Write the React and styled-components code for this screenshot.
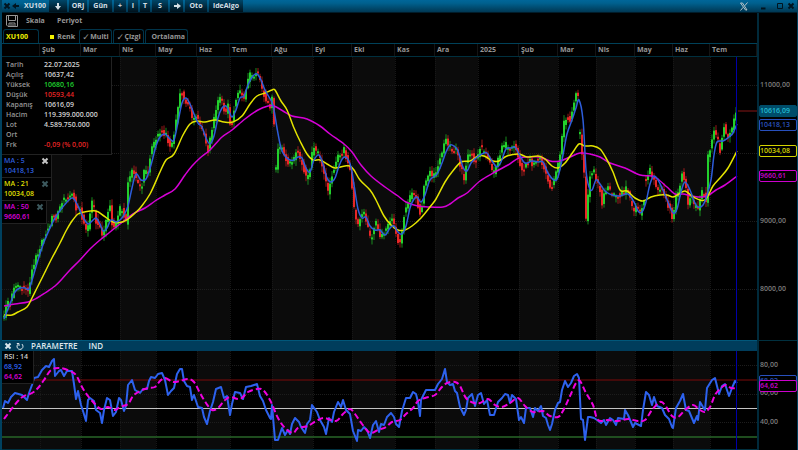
import React from "react";
import styled, { createGlobalStyle, css } from "styled-components";

const MONTHS = [
  ["", 0, 40, 1], ["Şub", 40, 81, 1], ["Mar", 81, 120, 0], ["Nis", 120, 156, 1], ["May", 156, 197, 0],
  ["Haz", 197, 230, 1], ["Tem", 230, 272, 0], ["Ağu", 272, 313, 1], ["Eyl", 313, 352, 0],
  ["Eki", 352, 395, 1], ["Kas", 395, 435, 0], ["Ara", 435, 478, 1], ["2025", 478, 519, 0],
  ["Şub", 519, 558, 1], ["Mar", 558, 596, 0], ["Nis", 596, 635, 1], ["May", 635, 673, 0],
  ["Haz", 673, 710, 1], ["Tem", 710, 757, 0],
].map(([label, from, to, shaded]) => ({ label, from: Math.max(from, 2), to, shaded: Boolean(shaded) }));

const parse = (text) => text.trim().split(/\s+/).map((p) => p.split(",").map(Number));

const PRICE = [
  "4,317 6,308 8,302 10,303 12,296 14,285 17,285 20,288 24,288 28,291 30,281 33,266 35,258 38,253 41,243 45,234 50,224 53,212 56,220 60,207 63,200 66,198 70,196 73,194 76,208 80,210 84,224 87,235 91,205 93,202 96,222 100,230 103,238 107,215 110,208 113,230 116,225 120,209 123,212 126,222 128,182 132,170 136,178 139,188 142,185 144,172 148,170 151,150 155,140 158,134 162,132 166,135 169,145 172,144 175,127 178,105 180,92 184,97 187,105 190,108 193,120 196,117 200,126 204,135 208,150 213,122 217,103 221,99 225,115 228,105 231,130 234,108 237,92 241,93 244,98 247,83 250,75 254,74 257,73 260,80 263,92 267,103 270,108 272,98 274,122",
  "276,170 278,150 282,148 285,157 289,163 293,160 296,152 299,155 303,165 307,182 310,168 313,148 316,150 320,158 324,172 328,192 331,177 335,165 338,155 341,155 344,150 347,160 350,170 353,197 355,218 358,227 361,212 365,214 368,228 371,240 374,226 377,220 380,240 384,232 388,225 392,220 396,232 399,246 400,243 402,230 405,208 408,203 411,195 415,192 418,205 421,217 424,185 427,175 430,173 433,178 436,172 440,160 443,148 445,136 448,145 452,150 456,150 460,165 464,178 467,156 471,150 474,160 477,160 480,148 484,150 488,158 492,170 495,172 499,155 502,148 506,145 510,147 514,144 518,155 521,168 525,168 529,160 533,165 537,158 541,160 545,170 549,183 552,188 555,175 558,165 560,155 562,135 564,122 567,118 570,120 573,105 576,95 579,94",
  "580,135 583,166 585,182 586,220 588,195 590,175 593,168 596,180 600,190 602,205 605,190 608,188 612,195 616,197 620,195 624,192 627,186 630,198 633,212 636,208 640,214 644,198",
  "646,180 648,173 650,170 654,180 658,190 662,188 666,200 670,210 673,220 676,198 679,188 682,174 685,182 688,205 691,195 694,205 698,208 701,192 704,195 706,200 708,155 711,147 714,130 717,137 720,150 724,127 728,138 731,130 733,125 735,111 737,109",
].map(parse);

const MA5 = parse("4,319 10,304 15,292 20,288 25,288 29,289 33,277 38,260 44,242 50,228 55,218 62,208 68,201 73,198 78,206 83,217 88,224 92,221 96,218 100,224 103,231 107,228 111,220 116,222 120,220 124,215 128,206 132,188 136,174 141,180 146,179 151,165 156,146 160,137 165,134 170,139 174,140 178,122 182,103 186,98 190,104 194,114 198,123 202,127 206,138 210,144 214,136 218,118 222,108 226,106 229,111 232,117 236,110 240,98 244,96 248,85 253,76 257,74 261,80 265,90 269,97 273,105 277,128 281,148 285,156 290,160 294,160 298,157 302,158 306,168 310,172 314,160 319,155 323,164 327,178 331,182 335,178 339,166 343,158 347,158 351,167 354,185 358,209 362,218 366,217 370,226 375,230 380,230 385,235 390,228 394,226 398,232 402,234 406,226 410,208 414,199 417,197 421,202 425,195 430,180 437,174 442,163 446,152 450,145 454,146 458,151 463,167 467,171 471,163 476,158 482,154 487,153 492,161 497,167 501,162 506,149 511,148 515,147 519,154 525,163 532,161 538,162 543,162 548,173 554,180 558,177 563,155 567,134 572,120 576,108 579,100 583,120 586,170 589,187 592,190 596,180 600,184 605,191 612,195 620,196 628,194 634,202 638,211 642,212 646,202 650,184 654,176 658,180 663,190 668,202 673,213 677,209 681,192 685,182 690,190 694,201 698,207 703,205 707,195 711,180 714,155 717,142 723,141 729,137 733,133 737,124");
const MA21 = parse("4,315 12,315 18,312 27,307 32,298 38,286 45,272 52,258 60,243 66,231 72,221 78,214 84,212 96,211 104,216 113,222 122,222 128,219 135,213 141,207 150,194 160,172 166,160 174,154 183,135 190,124 197,121 205,122 215,120 224,122 233,122 242,116 250,104 257,96 265,93 272,90 275,90 281,101 287,110 294,128 300,141 307,154 313,160 320,160 327,164 335,168 345,166 350,166 354,170 360,180 370,190 376,200 384,216 391,225 398,230 405,230 412,226 421,218 430,207 436,199 445,182 452,172 461,162 470,161 478,156 484,156 493,161 499,161 507,156 519,154 527,157 538,156 545,159 552,166 558,168 565,163 573,152 579,144 585,146 593,146 600,149 606,158 613,172 620,190 627,191 635,198 643,201 651,197 660,195 667,195 673,197 679,194 685,191 692,196 700,200 706,199 713,186 720,178 728,168 737,151");
const MA50 = parse("4,306 15,304 28,302 37,298 45,293 55,286 62,279 70,270 80,260 90,249 100,240 110,232 120,224 133,214 145,208 155,201 165,195 175,189 185,175 192,166 200,158 210,150 222,137 232,130 245,119 258,110 268,106 274,106 283,111 292,116 307,119 320,126 330,134 344,144 352,152 361,165 371,176 385,187 398,196 406,202 418,206 430,207 443,207 450,204 458,198 467,193 480,181 495,172 508,165 519,158 530,157 540,157 550,161 560,161 570,157 580,153 590,154 600,157 610,163 625,168 640,175 652,176 659,180 667,187 675,194 683,194 692,196 702,197 709,195 716,190 725,185 737,176");
const RSI = parse("3,408 5,401 8,403 11,397 15,393 22,395 27,400 29,393 32,385 34,378 38,377 42,370 46,366 49,367 52,361 54,359 55,376 59,371 61,370 64,376 67,371 72,371 74,384 76,399 78,391 81,405 83,411 86,421 88,400 90,398 94,401 96,410 100,413 102,423 104,410 107,398 110,400 113,416 116,412 119,398 121,400 124,411 126,406 128,385 132,380 135,390 140,393 143,389 147,389 149,381 151,377 155,378 158,374 162,373 165,380 168,395 171,391 174,388 177,374 180,369 182,369 184,381 187,386 190,387 192,400 194,395 198,407 202,408 204,417 207,424 210,411 213,402 216,389 221,387 224,398 227,396 230,415 232,404 235,392 240,393 243,399 246,387 251,386 257,384 260,396 263,401 266,410 270,418 271,419 272,405 275,440 278,440 282,428 285,435 288,430 290,434 292,424 295,418 299,422 301,427 305,433 307,424 310,420 312,405 317,412 320,420 324,427 326,434 329,418 332,422 334,412 338,402 341,407 343,400 346,410 350,414 353,431 357,441 358,430 361,431 364,427 367,430 370,438 373,425 376,421 379,432 381,424 384,425 387,417 391,413 394,417 396,424 399,427 402,411 406,398 410,398 413,392 416,394 418,402 420,416 421,400 426,390 435,390 438,384 442,379 445,369 447,382 450,385 453,384 455,391 457,393 460,407 464,415 466,410 468,398 472,394 475,406 478,395 481,393 484,404 487,400 490,415 494,415 498,402 502,398 505,394 508,395 510,403 512,395 516,399 519,420 521,417 524,423 526,408 530,408 533,417 535,408 538,411 541,406 543,416 546,418 548,425 550,430 552,424 555,410 558,403 560,402 562,390 565,381 568,387 571,383 574,376 577,374 579,378 581,419 583,420 585,440 588,417 590,417 594,418 597,420 601,423 604,420 606,425 610,418 613,420 616,425 618,418 624,419 625,410 628,415 633,427 635,423 641,426 643,410 646,392 649,395 652,405 654,397 657,406 662,408 665,415 669,419 672,427 673,428 676,408 680,401 683,394 686,410 689,411 694,423 697,416 698,420 700,402 703,407 705,410 707,388 712,380 715,378 719,394 722,386 725,384 729,396 732,388 735,381 737,383");
const RSI_MA = parse("4,419 10,411 18,401 24,396 32,393 38,388 44,380 51,370 60,368 70,371 76,375 82,387 88,396 95,404 101,409 108,407 115,410 120,407 128,404 133,396 140,391 148,388 155,387 160,381 165,378 173,382 180,381 188,379 194,382 200,393 206,403 212,410 218,408 224,401 230,397 240,399 248,392 257,389 263,390 270,400 278,418 285,428 293,433 298,428 308,426 316,421 324,418 336,421 343,414 350,409 355,414 362,424 370,433 378,430 386,427 392,422 400,420 406,414 413,408 418,401 425,398 435,395 441,388 447,383 455,382 460,386 466,398 474,403 480,403 488,399 495,405 502,407 510,403 518,398 525,406 533,412 543,411 550,416 558,417 563,411 570,396 576,383 580,381 586,393 593,405 598,420 608,420 618,421 628,419 638,421 645,420 652,410 660,402 665,405 672,416 678,417 685,410 693,405 700,410 705,412 710,407 715,395 721,388 726,385 731,388 737,388");

const straight = (pts) => "M" + pts.map((p) => p.join(" ")).join("L");

const smooth = (pts) =>
  pts.reduce((d, p, i) => {
    if (i === 0) return `M${p[0]} ${p[1]}`;
    const a = pts[i - 2] || pts[i - 1];
    const b = pts[i - 1];
    const n = pts[i + 1] || p;
    const c1 = [b[0] + (p[0] - a[0]) / 6, b[1] + (p[1] - a[1]) / 6];
    const c2 = [p[0] - (n[0] - b[0]) / 6, p[1] - (n[1] - b[1]) / 6];
    return `${d}C${c1.map((v) => v.toFixed(1)).join(" ")} ${c2.map((v) => v.toFixed(1)).join(" ")} ${p[0]} ${p[1]}`;
  }, "");

const noise = (n) => {
  const s = Math.sin(n * 12.9898) * 43758.5453;
  return s - Math.floor(s);
};

const valueAt = (pts, x) => {
  const i = pts.findIndex((p) => p[0] >= x);
  if (i <= 0) return pts[i === 0 ? 0 : pts.length - 1][1];
  const [x0, y0] = pts[i - 1];
  const [x1, y1] = pts[i];
  return y0 + ((y1 - y0) * (x - x0)) / (x1 - x0);
};

const CANDLES = PRICE.flatMap((pts) => {
  const list = [];
  const end = pts[pts.length - 1][0];
  for (let x = pts[0][0]; x <= end; x += 2) {
    const open = valueAt(pts, x - 2) + (noise(x) - 0.5) * 6;
    const close = valueAt(pts, x) + (noise(x + 0.5) - 0.5) * 6;
    const top = Math.min(open, close);
    const bottom = Math.max(open, close, top + 2);
    list.push({
      x, top, bottom,
      high: top - 1 - noise(x + 7) * 5,
      low: bottom + 1 + noise(x + 13) * 5,
      up: close < open,
    });
  }
  return list;
});

const GlobalStyle = createGlobalStyle`
  * { box-sizing: border-box; }
  body { margin: 0; background: #000; }
  button, input { font: inherit; color: inherit; margin: 0; padding: 0; border: 0; background: none; }
`;

const Window = styled.main`
  display: flex;
  flex-direction: column;
  height: 100vh;
  min-height: 400px;
  overflow: hidden;
  border-left: 2px solid #00415f;
  border-right: 1px solid #00415f;
  background: #000;
  color: #969696;
  font: 600 7px/10px "Open Sans", "Noto Sans", sans-serif;
`;

const TitleBar = styled.header`
  display: flex;
  flex: none;
  height: 13px;
  padding-right: 1px;
  background: linear-gradient(#006699, #00618f 25%, #003854);
  border-bottom: 1px solid #001c2a;
`;

const TitleButton = styled.button`
  display: flex;
  align-items: center;
  justify-content: center;
  width: ${(p) => p.$width}px;
  height: 12px;
  color: ${(p) => p.$color || "#d3dfe5"};
  font-weight: 700;
  ${(p) => p.$boxed && css`
    border-right: 2px solid transparent;
    background: linear-gradient(#004668, #00121c) padding-box;
  `}
`;

const Spacer = styled.div`
  flex: 1;
`;

const Workspace = styled.div`
  display: grid;
  flex: 1;
  min-height: 0;
  grid-template-columns: minmax(0, 1fr) 40px;
  grid-template-rows: 15px 16px 13px minmax(0, 283fr) 11px minmax(0, 99fr);
`;

const MenuRow = styled.nav`
  display: flex;
  align-items: center;
  padding-left: 3px;
`;

const MenuButton = styled.button`
  min-width: ${(p) => p.$width}px;
  text-align: left;
  font-weight: 700;
`;

const TabRow = styled.div`
  display: flex;
  gap: 1px;
  padding: 1px 0 0 1px;
  border-bottom: 1px solid #004159;
`;

const tabFrame = css`
  display: flex;
  align-items: center;
  justify-content: ${(p) => p.$align || "center"};
  width: ${(p) => p.$width}px;
  padding: 0 2px;
  font-weight: 700;
  color: ${(p) => (p.$active ? "#f2f200" : "#969696")};
  border: 1px solid ${(p) => (p.$plain ? "transparent" : "#00344a")};
  border-bottom: 0;
  border-radius: 3px 3px 0 0;
`;

const Tab = styled.button`
  ${tabFrame}
`;

const CheckTab = styled.label`
  ${tabFrame}
  gap: 1px;
`;

const Check = styled.input`
  appearance: none;
  width: 7px;
  height: 10px;
  &:checked::before { content: "✓"; font: 700 9px/10px "DejaVu Sans", sans-serif; }
`;

const Swatch = styled.span`
  width: 4px;
  height: 4px;
  margin-right: 3px;
  background: #f2f200;
`;

const Months = styled.div`
  display: grid;
  grid-template-columns: ${MONTHS.map((m) => `${m.to - m.from}fr`).join(" ")};
  border-bottom: 1px solid #00303f;
  font-weight: 700;
`;

const Month = styled.div`
  padding: 1px 0 0 2px;
  border-right: 1px solid #141414;
  white-space: nowrap;
  overflow: hidden;
`;

const Panel = styled.section`
  position: relative;
  min-width: 0;
  min-height: 0;
`;

const Plot = styled.svg`
  display: block;
  width: 100%;
  height: 100%;
`;

const AxisCell = styled.div`
  position: relative;
  grid-column: 2;
  grid-row: ${(p) => p.$row};
  border-left: 2px solid #002a3b;
  ${(p) => p.$line && "border-top: 1px solid #00303f;"}
`;

const Tick = styled.span`
  position: absolute;
  left: 0;
  padding-left: 1px;
  transform: translateY(-50%);
  color: #7c7c7c;
`;

const Tag = styled(Tick)`
  right: 0;
  padding-left: 0;
  border: 1px solid ${(p) => p.$color};
  border-radius: 2px;
  background: ${(p) => p.$fill || "#000"};
  color: ${(p) => p.$text || p.$color};
`;

const Overlay = styled.div`
  position: absolute;
  top: 0;
  left: 0;
  display: flex;
  flex-direction: column;
  align-items: flex-start;
`;

const QuoteTable = styled.table`
  width: 110px;
  padding: 3px 0 4px 4px;
  border-spacing: 0;
  background: #000;
  border-right: 1px solid #222;
  border-bottom: 1px solid #222;
`;

const QuoteName = styled.th`
  width: 38px;
  height: 10px;
  padding: 0;
  text-align: left;
  font-weight: 600;
`;

const QuoteValue = styled.td`
  padding: 0;
  white-space: nowrap;
  color: ${(p) => p.$color};
`;

const Legend = styled.div`
  width: ${(p) => p.$width}px;
  padding: 1px 2px;
  background: #000;
  color: ${(p) => p.$color};
  border-right: 1px solid #222;
  border-bottom: 1px solid #222;
`;

const LegendHead = styled.div`
  display: flex;
  justify-content: space-between;
  white-space: nowrap;
`;

const LegendLine = styled.div`
  white-space: nowrap;
  color: ${(p) => p.$color};
`;

const LegendClose = styled.button`
  width: 8px;
  height: 10px;
  color: ${(p) => p.$color};
`;

const IndicatorBar = styled.div`
  display: flex;
  align-items: center;
  gap: 11px;
  padding-left: 2px;
  background: #003d5c;
  border-top: 1px solid #00577a;
  color: #dbe6ec;
`;

const IndicatorButton = styled.button`
  display: flex;
  font-size: 8px;
  font-weight: 600;
  line-height: 10px;
`;

const IndicatorTools = styled.div`
  display: flex;
  align-items: center;
  gap: 4px;
  margin-right: -4px;
`;

const Glyph = styled.svg`
  display: block;
  flex: none;
  fill: none;
  stroke: currentColor;
`;

const Cross = () => (
  <Glyph width="8" height="8" viewBox="0 0 8 8" strokeWidth="2" aria-hidden="true">
    <path d="M1.5 1.5 6.5 6.5M6.5 1.5 1.5 6.5" />
  </Glyph>
);

const Arrow = ({ angle }) => (
  <Glyph width="8" height="8" viewBox="0 0 8 8" strokeWidth="2" aria-hidden="true">
    <g transform={`rotate(${angle} 4 4)`}>
      <path d="M1 4H5" />
      <path d="M4 1 8 4 4 7Z" fill="currentColor" stroke="none" />
    </g>
  </Glyph>
);

const SaveIcon = () => (
  <Glyph width="14" height="14" viewBox="0 0 14 14" aria-hidden="true">
    <path d="M1.5 1.5H12.5V12.5H3L1.5 11ZM3.5 1.5V6.5H10.5V1.5" />
    <path d="M4 12V9H10V12M6 9.5V12M8 10V12" />
  </Glyph>
);

const ReloadIcon = () => (
  <Glyph width="8" height="10" viewBox="0 0 8 10" aria-hidden="true">
    <path d="M2.5 2.8A3 3 0 1 0 5.8 3M0.8 2.5H3V5" />
  </Glyph>
);

const BrandIcon = () => (
  <Glyph width="8" height="9" viewBox="0 0 8 9" aria-hidden="true">
    <path d="M0.5 1H2.5L7 8H5.5ZM7.5 0.5 4.7 3.8M3.2 5.3 0.5 8.5" />
  </Glyph>
);

const MinimizeIcon = () => (
  <Glyph width="6" height="8" viewBox="0 0 6 8" strokeWidth="2" aria-hidden="true"><path d="M1 6.5H5.5" /></Glyph>
);

const MaximizeIcon = () => (
  <Glyph width="6" height="8" viewBox="0 0 6 8" aria-hidden="true"><path d="M.5 1.5H5.5V6.5H.5Z" /></Glyph>
);

const Backdrop = ({ top, bottom, lines }) => (
  <g>
    {MONTHS.map((m) => (
      <rect key={m.from} x={m.from} y={top} width={m.to - m.from} height={bottom - top} fill={m.shaded ? "#0b0b0b" : "#000"} />
    ))}
    <g stroke="#1d1d1d" strokeDasharray="1 1">
      {lines.map((y) => <path key={y} d={`M2 ${y}H757`} />)}
      {MONTHS.slice(0, -1).map((m) => <path key={m.to} d={`M${m.to + 0.5} ${top}V${bottom}`} stroke="#171717" />)}
    </g>
  </g>
);

const PriceChart = () => (
  <Plot viewBox="2 57 755 283" preserveAspectRatio="none" role="img" aria-label="XU100">
    <Backdrop top={57} bottom={340} lines={[85.5, 153.5, 221.5, 289.5]} />
    {CANDLES.map((c) => (
      <g key={c.x} fill={c.up ? "#22d02c" : "#e82626"}>
        <rect x={c.x - 0.5} y={c.high} width="1" height={c.low - c.high} opacity="0.65" />
        <rect x={c.x - 1} y={c.top} width="2" height={c.bottom - c.top} />
      </g>
    ))}
    <g fill="none" strokeWidth="1.5" strokeLinejoin="round">
      <path d={smooth(MA50)} stroke="#d600d6" />
      <path d={smooth(MA21)} stroke="#e4e400" />
      <path d={smooth(MA5)} stroke="#2d5ddb" />
    </g>
    <path d="M736.5 57V340" stroke="#0000a8" />
    <path d="M738 111H757" stroke="#861616" />
  </Plot>
);

const RsiChart = () => (
  <Plot viewBox="2 351 755 99" preserveAspectRatio="none" role="img" aria-label="RSI">
    <Backdrop top={351} bottom={450} lines={[365.5, 394.5, 422.5]} />
    <path d="M2 380H757" stroke="#7c0b0b" />
    <path d="M2 408.5H757" stroke="#c4c4c4" />
    <path d="M2 437H757" stroke="#286628" strokeWidth="1.5" />
    <path d="M2 449.5H757" stroke="#00303f" />
    <path d={straight(RSI)} fill="none" stroke="#2d62ee" strokeWidth="2" strokeLinejoin="round" />
    <path d={smooth(RSI_MA)} fill="none" stroke="#f000e0" strokeWidth="2" strokeDasharray="6 3" />
    <path d="M736.5 351V450" stroke="#0000a8" />
  </Plot>
);

const QUOTE = [
  ["Tarih", "22.07.2025"], ["Açılış", "10637,42"], ["Yüksek", "10680,16", "#1fd32f"],
  ["Düşük", "10593,44", "#e32424"], ["Kapanış", "10616,09"], ["Hacim", "119.399.000.000"],
  ["Lot", "4.589.750.000"], ["Ort", ""], ["Frk", "-0,09 (% 0,00)", "#e32424"],
];

const AVERAGES = [
  { name: "MA :  5", value: "10418,13", color: "#2d5ddb", width: 50, close: "#c4c4c4" },
  { name: "MA : 21", value: "10034,08", color: "#dede00", width: 50, close: "#3d5a5f" },
  { name: "MA : 50", value: "9660,61", color: "#dd00dd", width: 45, close: "#3d5a5f" },
];

const share = (max, min) => (value) => ({ top: `${((max - value) / (max - min)) * 100}%` });
const priceTop = share(11412, 7250);
const rsiTop = share(90, 20);

export default function App() {
  return (
    <>
      <GlobalStyle />
      <Window>
        <TitleBar>
          <TitleButton $width={9} $color="#001420" aria-label="Kapat"><Cross /></TitleButton>
          <TitleButton $width={10} $color="#001420" aria-label="Geri"><Arrow angle={180} /></TitleButton>
          <TitleButton $width={28}>XU100</TitleButton>
          <TitleButton $width={20} $boxed aria-label="Aşağı"><Arrow angle={90} /></TitleButton>
          <TitleButton $width={20} $boxed>ORJ</TitleButton>
          <TitleButton $width={25} $boxed>Gün</TitleButton>
          <TitleButton $width={14} $boxed>+</TitleButton>
          <TitleButton $width={12} $boxed>I</TitleButton>
          <TitleButton $width={12} $boxed>T</TitleButton>
          <TitleButton $width={18} $boxed>S</TitleButton>
          <TitleButton $width={15} $boxed aria-label="İleri"><Arrow angle={0} /></TitleButton>
          <TitleButton $width={24} $boxed>Oto</TitleButton>
          <TitleButton $width={36} $boxed>ideAlgo</TitleButton>
          <Spacer />
          <TitleButton $width={14} $color="#b5c2c8" aria-label="Bağlantı"><BrandIcon /></TitleButton>
          <TitleButton $width={24} $color="#001420" aria-label="Küçült"><MinimizeIcon /></TitleButton>
          <TitleButton $width={10} $color="#001420" aria-label="Büyüt"><MaximizeIcon /></TitleButton>
          <TitleButton $width={11} $color="#001420" aria-label="Pencereyi kapat"><Cross /></TitleButton>
        </TitleBar>
        <Workspace>
          <MenuRow>
            <MenuButton $width={21} aria-label="Kaydet"><SaveIcon /></MenuButton>
            <MenuButton $width={31}>Skala</MenuButton>
            <MenuButton $width={31}>Periyot</MenuButton>
          </MenuRow>
          <TabRow>
            <Tab $width={36} $align="flex-start" $active>XU100</Tab>
            <Tab $width={38} $align="flex-end" $plain><Swatch />Renk</Tab>
            <CheckTab $width={33}><Check type="checkbox" defaultChecked />Multi</CheckTab>
            <CheckTab $width={31}><Check type="checkbox" defaultChecked />Çizgi</CheckTab>
            <Tab $width={43} $align="flex-end">Ortalama</Tab>
          </TabRow>
          <Months>
            {MONTHS.map((m) => <Month key={m.from}>{m.label}</Month>)}
          </Months>
          <Panel>
            <PriceChart />
            <Overlay>
              <QuoteTable>
                <tbody>
                  {QUOTE.map(([name, value, color = "#d0d0d0"]) => (
                    <tr key={name}>
                      <QuoteName scope="row">{name}</QuoteName>
                      <QuoteValue $color={color}>{value}</QuoteValue>
                    </tr>
                  ))}
                </tbody>
              </QuoteTable>
              {AVERAGES.map((a) => (
                <Legend key={a.name} $color={a.color} $width={a.width}>
                  <LegendHead>
                    {a.name}
                    <LegendClose $color={a.close} aria-label={`${a.name} kapat`}><Cross /></LegendClose>
                  </LegendHead>
                  {a.value}
                </Legend>
              ))}
            </Overlay>
          </Panel>
          <IndicatorBar>
            <IndicatorTools>
              <IndicatorButton aria-label="Göstergeyi kapat"><Cross /></IndicatorButton>
              <IndicatorButton aria-label="Yenile"><ReloadIcon /></IndicatorButton>
            </IndicatorTools>
            <IndicatorButton>PARAMETRE</IndicatorButton>
            <IndicatorButton>IND</IndicatorButton>
          </IndicatorBar>
          <Panel>
            <RsiChart />
            <Overlay>
              <Legend $width={32}>
                <LegendLine $color="#d0d0d0">RSI : 14</LegendLine>
                <LegendLine $color="#2d62ee">68,92</LegendLine>
                <LegendLine $color="#dd00dd">64,62</LegendLine>
              </Legend>
            </Overlay>
          </Panel>
          <AxisCell $row="1 / 4" />
          <AxisCell $row="4">
            {[11000, 9000, 8000].map((v) => <Tick key={v} style={priceTop(v)}>{v},00</Tick>)}
            <Tag $color="#004c69" $fill="#004c69" $text="#22bcd2" style={priceTop(10616)}>10616,09</Tag>
            <Tag $color="#2850bd" style={priceTop(10418)}>10418,13</Tag>
            <Tag $color="#d3d300" style={priceTop(10034)}>10034,08</Tag>
            <Tag $color="#cc00cc" style={priceTop(9661)}>9660,61</Tag>
          </AxisCell>
          <AxisCell $row="5" $line />
          <AxisCell $row="6">
            {[80, 60, 40].map((v) => <Tick key={v} style={rsiTop(v)}>{v},00</Tick>)}
            <Tag $color="#2850bd" style={rsiTop(69)}>68,92</Tag>
            <Tag $color="#cc00cc" style={rsiTop(65)}>64,62</Tag>
          </AxisCell>
        </Workspace>
      </Window>
    </>
  );
}
